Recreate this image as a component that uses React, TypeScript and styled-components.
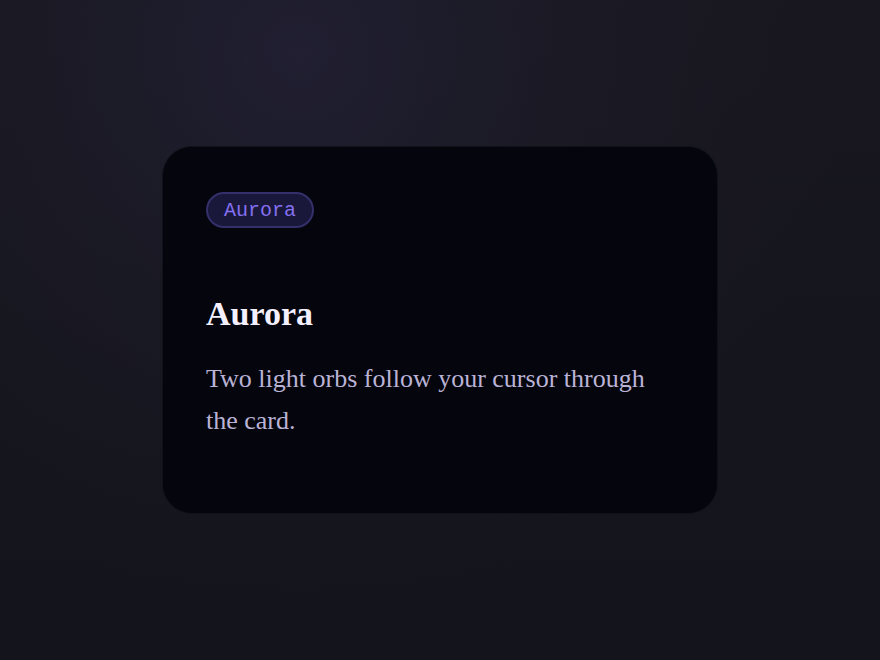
import React from "react";
import styled, { createGlobalStyle } from "styled-components";

const GlobalStyle = createGlobalStyle`
  html, body {
    margin: 0;
    padding: 0;
    height: 100%;
  }
  body {
    background: #14141b;
  }
  #root {
    height: 100%;
  }
`;

const Stage = styled.main`
  width: 880px;
  height: 660px;
  display: flex;
  align-items: center;
  justify-content: center;
  background:
    radial-gradient(circle at 34% 8%, rgba(34, 32, 52, 0.85) 0%, rgba(30, 29, 44, 0.45) 30%, rgba(20, 20, 27, 0) 65%),
    linear-gradient(180deg, #18171f 0%, #14141c 100%);
`;

const Card = styled.article`
  box-sizing: border-box;
  width: 556px;
  height: 368px;
  padding: 45px 43px;
  border-radius: 30px;
  background: #05050d;
  border: 1px solid rgba(255, 255, 255, 0.05);
  display: flex;
  flex-direction: column;
  align-items: flex-start;
`;

const Tag = styled.span`
  box-sizing: border-box;
  height: 36px;
  padding: 0 16px;
  border-radius: 18px;
  border: 2px solid #34306a;
  background: #19173a;
  color: #8470f0;
  font-family: "Liberation Mono", monospace;
  font-size: 20px;
  display: inline-flex;
  align-items: center;
`;

const Title = styled.h2`
  margin: 66px 0 0;
  color: #f4f0ff;
  font-family: "Liberation Serif", serif;
  font-weight: 700;
  font-size: 34px;
  line-height: 40px;
`;

const Body = styled.p`
  margin: 24px 0 0;
  color: #bab3d6;
  font-family: "Liberation Serif", serif;
  font-size: 26px;
  line-height: 42px;
`;

export default function App() {
  return (
    <>
      <GlobalStyle />
      <Stage>
        <Card>
          <Tag>Aurora</Tag>
          <Title>Aurora</Title>
          <Body>Two light orbs follow your cursor through the card.</Body>
        </Card>
      </Stage>
    </>
  );
}
